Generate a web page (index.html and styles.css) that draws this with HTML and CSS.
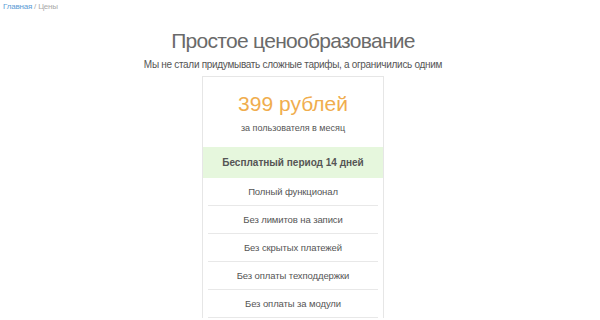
FILE: index.html
```html
<!DOCTYPE html>
<html lang="ru">
<head>
    <meta charset="UTF-8">
    <meta name="viewport" content="width=device-width, initial-scale=1.0">
    <title>Цены</title>
    <link rel="stylesheet" href="styles.css">
</head>
<body>
    <div class="crumbs">
        <a href="#">Главная</a> <span>/ Цены</span>
    </div>
    <div class="page">
        <h1>Простое ценообразование</h1>
        <p class="lead">Мы не стали придумывать сложные тарифы, а ограничились одним</p>
        <div class="plan">
            <div class="price">
                <div class="sum">399 рублей</div>
                <div class="per">за пользователя в месяц</div>
            </div>
            <div class="trial">Бесплатный период 14 дней</div>
            <ul class="features">
                <li>Полный функционал</li>
                <li>Без лимитов на записи</li>
                <li>Без скрытых платежей</li>
                <li>Без оплаты техподдержки</li>
                <li>Без оплаты за модули</li>
            </ul>
        </div>
    </div>
</body>
</html>
```
FILE: styles.css
```css
*,::after,::before{margin: 0; padding: 0; box-sizing: border-box;}
body{font-family: "Liberation Sans", Arial, sans-serif; background: #fff; color: #555; padding-right: 14px;}
.crumbs{font-size: 8px; letter-spacing: -0.2px; line-height: 12px; padding: 1px 3px; color: #aaa;}
.crumbs a{color: #5b9bd5; text-decoration: none;}
.page{text-align: center;}
h1{font-size: 21px; letter-spacing: -0.7px; font-weight: normal; color: #6a6a6a; line-height: 26px; margin-top: 14px;}
.lead{font-size: 10px; letter-spacing: -0.3px; line-height: 14px; margin-top: 4px; color: #555;}
.plan{width: 182px; margin: 4px auto 0; border: 1px solid #e6e6e6; border-bottom: none;}
.price{padding: 14px 0 12px;}
.sum{font-size: 21px; line-height: 26px; color: #f0ad4e;}
.per{font-size: 9px; line-height: 14px; margin-top: 4px; color: #555;}
.trial{background: #e6f7dd; font-size: 10px; font-weight: bold; line-height: 31px; color: #555;}
.features{list-style: none; margin: 0 5px;}
.features li{font-size: 9.5px; letter-spacing: -0.1px; line-height: 27px; border-bottom: 1px solid #e8e8e8; color: #555;}
```
